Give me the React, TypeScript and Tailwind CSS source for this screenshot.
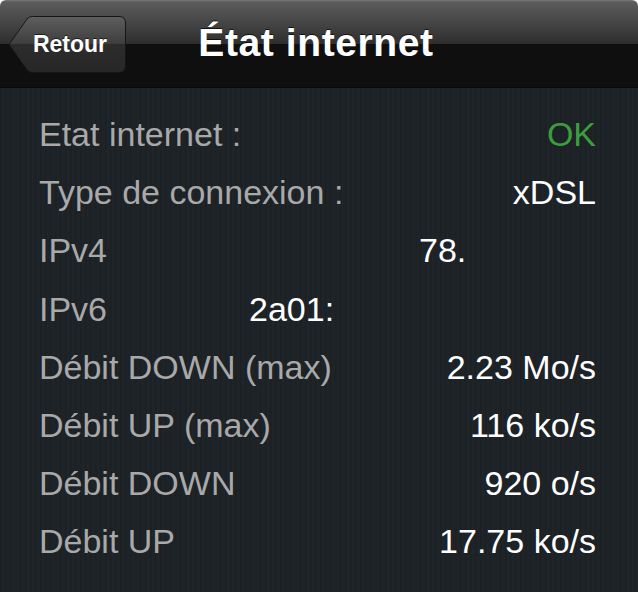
import React from "react";

const rows: { label: string; value: string; kind?: "ok" | "left"; w?: string }[] = [
  { label: "Etat internet :", value: "OK", kind: "ok" },
  { label: "Type de connexion :", value: "xDSL" },
  { label: "IPv4", value: "78.", kind: "left", w: "w-[177px]" },
  { label: "IPv6", value: "2a01:", kind: "left", w: "w-[347px]" },
  { label: "Débit DOWN (max)", value: "2.23 Mo/s" },
  { label: "Débit UP (max)", value: "116 ko/s" },
  { label: "Débit DOWN", value: "920 o/s" },
  { label: "Débit UP", value: "17.75 ko/s" },
];

function BackButton() {
  return (
    <div className="relative w-[118px] h-[57px] flex items-center justify-center pl-[6px]">
      <svg className="absolute inset-0" width="118" height="57" viewBox="0 0 118 57">
        <defs>
          <linearGradient id="bb" x1="0" y1="0" x2="0" y2="1">
            <stop offset="0" stopColor="#5e5e5e" />
            <stop offset="0.5" stopColor="#3d3d3d" />
            <stop offset="0.5" stopColor="#2c2c2c" />
            <stop offset="1" stopColor="#272727" />
          </linearGradient>
        </defs>
        <path
          d="M1 28.5 L19 3 Q21 0.5 24.5 0.5 L111 0.5 Q117.5 0.5 117.5 7 L117.5 50 Q117.5 56.5 111 56.5 L24.5 56.5 Q21 56.5 19 54 Z"
          fill="url(#bb)"
          stroke="#161616"
          strokeWidth="1"
        />
      </svg>
      <span className="relative text-white font-bold text-[23px] leading-none [text-shadow:0_-1px_0_rgba(0,0,0,0.6)]">
        Retour
      </span>
    </div>
  );
}

export default function App() {
  return (
    <div className="w-[638px] h-[592px] flex flex-col bg-white" style={{ fontFamily: '"Liberation Sans", Arial, sans-serif' }}>
      <div className="h-[88px] shrink-0 rounded-t-[6px] overflow-hidden flex flex-col relative border-b border-[#080808]">
        <div className="h-[44px] bg-[linear-gradient(#7a7a7a_0px,#5c5c5c_2px,#2e2e2e_100%)]" />
        <div className="flex-1 bg-[#0f0f0f]" />
        <div className="absolute inset-0 grid grid-cols-[1fr_auto_1fr] items-center">
          <div className="pl-[8px] flex items-center pt-[1px]">
            <BackButton />
          </div>
          <div className="text-white font-bold text-[39px] tracking-[0.6px] leading-none pb-[2px] mr-[6px] [text-shadow:0_-1px_0_rgba(0,0,0,0.7)]">
            État internet
          </div>
          <div />
        </div>
      </div>
      <div className="flex-1 pt-[17px] pl-[39px] pr-[42px] bg-[repeating-linear-gradient(90deg,#1c2125_0px,#1c2125_2px,#20252a_2px,#20252a_3px,#1e2327_3px,#1e2327_5px)]">
        {rows.map((r) => (
          <div key={r.label} className="h-[58.2px] flex items-center justify-between text-[34px] leading-none">
            <span className="text-[#a9a9a9]">{r.label}</span>
            {r.kind === "left" ? (
              <span className={`${r.w} text-left text-white`}>{r.value}</span>
            ) : (
              <span className={r.kind === "ok" ? "text-[#3b9d3b]" : "text-white"}>{r.value}</span>
            )}
          </div>
        ))}
      </div>
    </div>
  );
}
